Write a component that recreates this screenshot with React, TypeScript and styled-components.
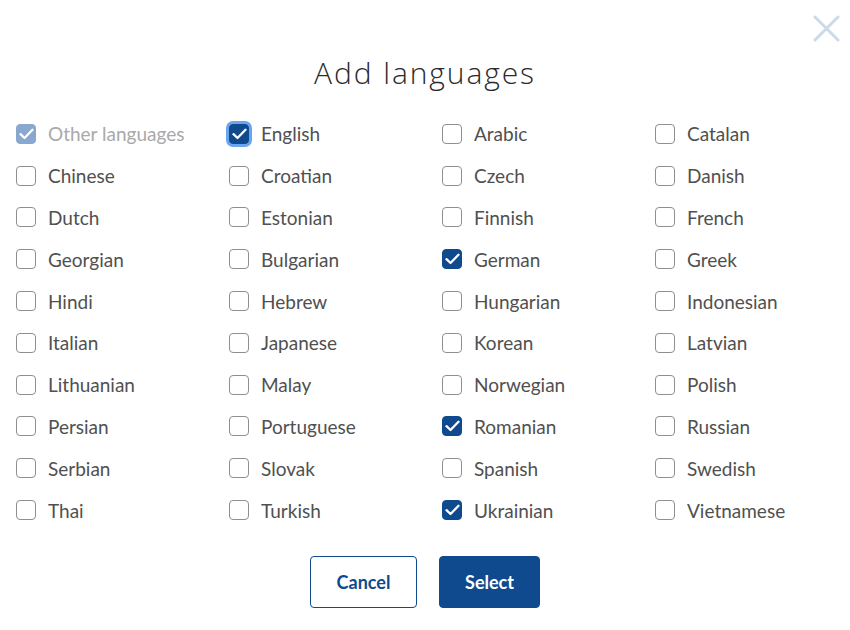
import React from "react";
import styled, { createGlobalStyle } from "styled-components";

const Global = createGlobalStyle`
  html, body { margin: 0; padding: 0; background: #fff; }
  body { font-family: Lato, "Liberation Sans", sans-serif; }
`;

const Dialog = styled.div`
  position: relative;
  width: 850px;
  height: 630px;
  box-sizing: border-box;
  padding-top: 52px;
  display: flex;
  flex-direction: column;
  align-items: stretch;
`;

const Close = styled.button`
  position: absolute;
  top: 15px;
  right: 10px;
  width: 27px;
  height: 27px;
  padding: 0;
  border: none;
  background: none;
  cursor: pointer;
`;

const Title = styled.h1`
  margin: 0;
  text-align: center;
  font-family: "Open Sans", sans-serif;
  font-weight: 300;
  font-size: 30px;
  line-height: 42px;
  color: #2b2b2b;
  letter-spacing: 1.9px;
`;

const Grid = styled.div`
  margin-top: 19px;
  padding-left: 16px;
  display: grid;
  grid-template-columns: repeat(3, 213px) 1fr;
  grid-auto-rows: 41.8px;
`;

const Item = styled.label<{ $disabled?: boolean }>`
  display: flex;
  align-items: center;
  gap: 12px;
  font-size: 19px;
  color: ${(p) => (p.$disabled ? "#a9a9a9" : "#505050")};
  cursor: pointer;
`;

const Box = styled.span<{ $checked?: boolean; $disabled?: boolean; $focus?: boolean }>`
  box-sizing: border-box;
  width: 20px;
  height: 20px;
  flex: none;
  border-radius: 4px;
  display: flex;
  align-items: center;
  justify-content: center;
  border: 1px solid
    ${(p) => (p.$disabled ? "#88a8cf" : p.$checked ? "#0f4a8e" : "#8f8f8f")};
  background: ${(p) => (p.$disabled ? "#88a8cf" : p.$checked ? "#0f4a8e" : "#fff")};
  box-shadow: ${(p) => (p.$focus ? "0 0 0 3px #6aa5ee" : "none")};
`;

const Buttons = styled.div`
  margin-top: 25px;
  display: flex;
  justify-content: center;
  gap: 22px;
`;

const Button = styled.button<{ $primary?: boolean }>`
  height: 52px;
  box-sizing: border-box;
  border-radius: 4px;
  font-family: Lato, sans-serif;
  font-weight: 700;
  font-size: 18px;
  padding: 0;
  border: 1px solid #0f4a8e;
  color: ${(p) => (p.$primary ? "#fff" : "#0f4a8e")};
  background: ${(p) => (p.$primary ? "#0f4a8e" : "#fff")};
  width: ${(p) => (p.$primary ? "101px" : "107px")};
  cursor: pointer;
`;

const Check = () => (
  <svg width="15" height="12" viewBox="0 0 15 12" fill="none">
    <path d="M1.5 6.2 L5.5 10 L13.5 1.8" stroke="#fff" strokeWidth="2.3" strokeLinecap="round" strokeLinejoin="round" />
  </svg>
);

const langs: [string, boolean?][] = [
  ["Other languages", true], ["English", true], ["Arabic"], ["Catalan"],
  ["Chinese"], ["Croatian"], ["Czech"], ["Danish"],
  ["Dutch"], ["Estonian"], ["Finnish"], ["French"],
  ["Georgian"], ["Bulgarian"], ["German", true], ["Greek"],
  ["Hindi"], ["Hebrew"], ["Hungarian"], ["Indonesian"],
  ["Italian"], ["Japanese"], ["Korean"], ["Latvian"],
  ["Lithuanian"], ["Malay"], ["Norwegian"], ["Polish"],
  ["Persian"], ["Portuguese"], ["Romanian", true], ["Russian"],
  ["Serbian"], ["Slovak"], ["Spanish"], ["Swedish"],
  ["Thai"], ["Turkish"], ["Ukrainian", true], ["Vietnamese"],
];

export default function App() {
  return (
    <>
      <Global />
      <Dialog>
        <Close aria-label="Close">
          <svg width="27" height="27" viewBox="0 0 27 27">
            <path d="M2 2 L25 25 M25 2 L2 25" stroke="#ccd9ea" strokeWidth="3" strokeLinecap="round" />
          </svg>
        </Close>
        <Title>Add languages</Title>
        <Grid>
          {langs.map(([name, checked]) => {
            const disabled = name === "Other languages";
            const focus = name === "English";
            return (
              <Item key={name} $disabled={disabled}>
                <Box $checked={!!checked} $disabled={disabled} $focus={focus}>
                  {checked && <Check />}
                </Box>
                {name}
              </Item>
            );
          })}
        </Grid>
        <Buttons>
          <Button>Cancel</Button>
          <Button $primary>Select</Button>
        </Buttons>
      </Dialog>
    </>
  );
}
